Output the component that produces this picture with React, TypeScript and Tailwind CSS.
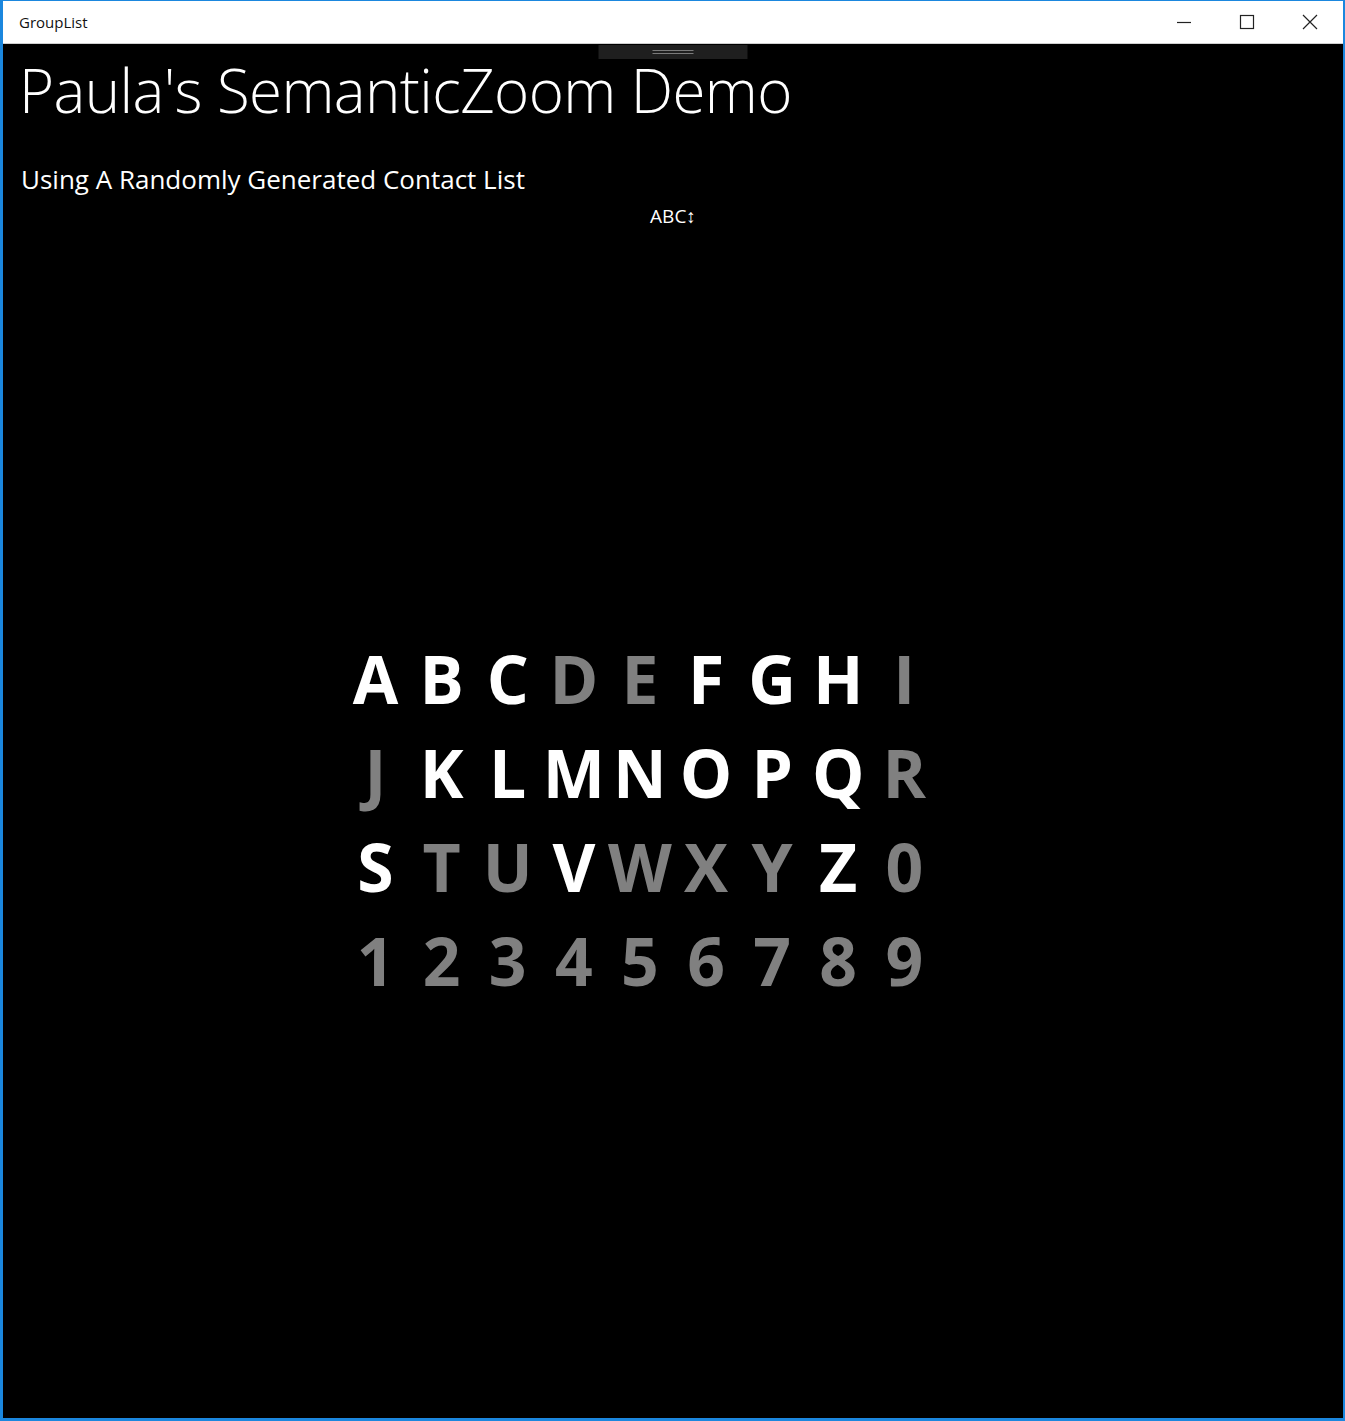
const rows: { ch: string; on: boolean }[][] = [
  [
    { ch: "A", on: true },
    { ch: "B", on: true },
    { ch: "C", on: true },
    { ch: "D", on: false },
    { ch: "E", on: false },
    { ch: "F", on: true },
    { ch: "G", on: true },
    { ch: "H", on: true },
    { ch: "I", on: false },
  ],
  [
    { ch: "J", on: false },
    { ch: "K", on: true },
    { ch: "L", on: true },
    { ch: "M", on: true },
    { ch: "N", on: true },
    { ch: "O", on: true },
    { ch: "P", on: true },
    { ch: "Q", on: true },
    { ch: "R", on: false },
  ],
  [
    { ch: "S", on: true },
    { ch: "T", on: false },
    { ch: "U", on: false },
    { ch: "V", on: true },
    { ch: "W", on: false },
    { ch: "X", on: false },
    { ch: "Y", on: false },
    { ch: "Z", on: true },
    { ch: "0", on: false },
  ],
  "123456789".split("").map((ch) => ({ ch, on: false })),
];

function TitleBar() {
  return (
    <div className="h-[43px] flex items-center bg-white border-b border-[#cfcfcf] shrink-0">
      <span className="pl-4 text-[15px] text-[#111] font-['Open_Sans',sans-serif]">GroupList</span>
      <div className="ml-auto flex h-full">
        <button className="w-[63px] h-full flex items-center justify-center">
          <svg width="16" height="16" viewBox="0 0 16 16">
            <path d="M1 8.5h14" stroke="#222" strokeWidth="1.2" />
          </svg>
        </button>
        <button className="w-[63px] h-full flex items-center justify-center">
          <svg width="16" height="16" viewBox="0 0 16 16">
            <rect x="1.5" y="1.5" width="13" height="13" fill="none" stroke="#222" strokeWidth="1.2" />
          </svg>
        </button>
        <button className="w-[63px] h-full flex items-center justify-center mr-[2px]">
          <svg width="16" height="16" viewBox="0 0 16 16">
            <path d="M1 1l14 14M15 1L1 15" stroke="#222" strokeWidth="1.2" />
          </svg>
        </button>
      </div>
    </div>
  );
}

export default function App() {
  return (
    <div className="w-[1345px] h-[1421px] flex flex-col border-t border-l-[3px] border-r-[2px] border-b-[3px] border-[#1b87de] bg-black overflow-hidden font-['Open_Sans',sans-serif]">
      <TitleBar />
      <div className="relative flex-1 bg-black text-white">
        <div className="absolute left-1/2 -translate-x-1/2 top-[1px] w-[149px] h-[14px] bg-[#1f1f1f] flex flex-col items-center justify-center gap-[2px]">
          <div className="w-[41px] h-[1px] bg-[#7a7a7a]" />
          <div className="w-[41px] h-[1px] bg-[#7a7a7a]" />
        </div>

        <h1 className="mt-[16px] pl-4 text-[60px] leading-none font-light tracking-[-0.6px]">
          Paula's SemanticZoom Demo
        </h1>
        <p className="mt-[46px] pl-[18px] text-[26px] leading-none">
          Using A Randomly Generated Contact List
        </p>
        <p className="mt-[15px] text-center text-[19px] leading-none">ABC↕</p>

        <div className="mt-[405px] w-[661px] mx-auto">
          {rows.map((row, i) => (
            <div key={i} className="grid grid-cols-[repeat(9,66.1px)] h-[94px]">
              {row.map((c) => (
                <span
                  key={c.ch}
                  className={`text-center text-[66px] leading-[94px] font-bold ${c.on ? "text-white" : "text-[#808080]"}`}
                >
                  {c.ch}
                </span>
              ))}
            </div>
          ))}
        </div>
      </div>
    </div>
  );
}
